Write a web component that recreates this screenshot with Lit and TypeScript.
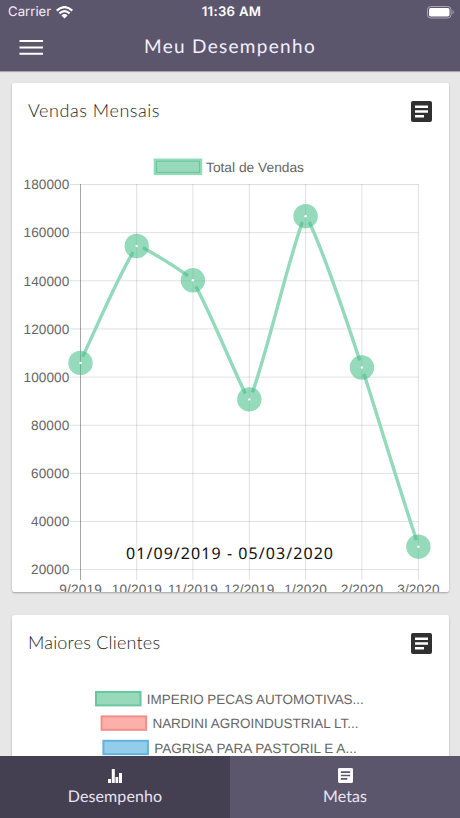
import { LitElement, html, css, svg } from "lit";
import { customElement } from "lit/decorators.js";

const ticks = [180000, 160000, 140000, 120000, 100000, 80000, 60000, 40000, 20000];
const months = ["9/2019", "10/2019", "11/2019", "12/2019", "1/2020", "2/2020", "3/2020"];
const xs = [80.5, 136.7, 192.9, 249.3, 305.6, 361.9, 418.4];
const ys = [362.9, 246, 280.3, 399.4, 216.2, 367.5, 546.7];
const segments = [
  "M82.8 356.5 C99 322 116 281 133.2 252",
  "M143 247.8 C158 256 173 265 188 275.8",
  "M196 286.5 C214 321 230 362 245.3 393.5",
  "M252.5 392.5 C271 338 285 272 302.3 222",
  "M309.3 222 C328 263 345 316 359.8 360.5",
  "M364 374 C382 430 399 488 416.5 540",
];
const clients = [
  { name: "IMPERIO PECAS AUTOMOTIVAS...", x: 95, w: 217, fill: "#98d9bb", line: "#68c79c" },
  { name: "NARDINI AGROINDUSTRIAL LT...", x: 100.6, w: 206, fill: "#fbb1aa", line: "#f48d87" },
  { name: "PAGRISA PARA PASTORIL E A...", x: 102.4, w: 202.5, fill: "#94cceb", line: "#60b3dc" },
];

@customElement("app-root")
export class AppRoot extends LitElement {
  static styles = css`
    :host { display: flex; flex-direction: column; height: 818px; width: 460px; overflow: hidden; background: #e7e7e7; font-family: Lato, sans-serif; color: #222; text-rendering: geometricPrecision; }
    * { box-sizing: border-box; }
    header { flex: none; height: 71px; background: #5c566d; color: #fff; box-shadow: 0 1px 1px #aaa7b3; }
    .status { height: 24px; display: grid; grid-template-columns: 1fr auto 1fr; align-items: center; padding: 0 5px 0 8px; font: 13.2px/24px Inter, sans-serif; }
    .carrier { display: flex; align-items: center; gap: 5px; color: #f0edf5; }
    .clock { font-weight: 600; letter-spacing: .3px; }
    .battery { justify-self: end; }
    .bar { height: 45px; display: grid; grid-template-columns: 62px 1fr 62px; align-items: center; }
    .menu { margin-left: 19px; }
    h1 { margin: 0; text-align: center; font-size: 19px; line-height: 24px; font-weight: 400; letter-spacing: 1.3px; color: #f3effc; }
    main { flex: 1; min-height: 0; overflow: hidden; padding: 11.5px 11.5px 0; display: flex; flex-direction: column; gap: 23px; }
    .card { flex: none; height: 509px; background: #fff; border-radius: 2px; box-shadow: 0 1px 2px #0000004d; overflow: hidden; }
    .head { height: 58px; display: flex; justify-content: space-between; align-items: center; padding: 0 16.5px; }
    h2 { margin: 0; padding-bottom: 3px; font-size: 18px; font-weight: 300; letter-spacing: .55px; }
    h2.tight { letter-spacing: .2px; }
    svg { display: block; }
    svg text { font-family: "Liberation Sans", sans-serif; font-size: 13.6px; fill: #666; }
    svg .period { font-family: "Noto Sans", sans-serif; font-size: 16px; fill: #111; }
    nav { flex: none; height: 62.5px; display: grid; grid-template-columns: 1fr 1fr; color: #e9e3f4; background: #5c566d; }
    .tab { display: flex; flex-direction: column; align-items: center; padding-top: 12px; gap: 4px; font-size: 16px; line-height: 20px; letter-spacing: .1px; }
    .active { background: #443f51; }
  `;

  note(size: number, color: string) {
    return html`<svg width=${size} height=${size} viewBox="0 0 21 21"><path fill=${color} fill-rule="evenodd" d="M2 0H19Q21 0 21 2V19Q21 21 19 21H2Q0 21 0 19V2Q0 0 2 0ZM4 4.6V7H17V4.6ZM4 9.3V11.7H17V9.3ZM4 14V16.4H13V14Z"/></svg>`;
  }

  chart() {
    return html`<svg width="437" height="451" viewBox="12 141 437 451">
      <rect x="155.2" y="160" width="45.5" height="13.6" fill="#98d9bb" stroke="#92dabb" stroke-width="3"/>
      <rect x="156.4" y="161.2" width="43.2" height="11.2" fill="none" stroke="#64c69a"/>
      <text x="206" y="171.7" textLength="98" lengthAdjust="spacingAndGlyphs">Total de Vendas</text>
      ${ticks.map((t, i) => {
        const y = 184.5 + i * 48.15;
        return svg`<path d="M70 ${y}H418.5" stroke="#000" stroke-opacity=".12"/><text x="69.2" y=${y + 4.7} text-anchor="end" textLength=${t >= 100000 ? 45.7 : 38.2}>${t}</text>`;
      })}
      ${months.map((m, i) => svg`<path d="M${xs[i]} 184V580" stroke="#000" stroke-opacity=${i ? ".12" : ".35"}/><text x=${xs[i]} y="593.5" text-anchor="middle" textLength=${m.length > 6 ? 50 : 42.5}>${m}</text>`)}
      ${segments.map((d) => svg`<path d=${d} fill="none" stroke="#92dabb" stroke-width="3.4"/>`)}
      ${xs.map((x, i) => svg`<circle cx=${x} cy=${ys[i]} r="12.2" fill="#43be87" fill-opacity=".57"/><circle cx=${x} cy=${ys[i]} r="1.2" fill="#fff"/>`)}
      <text class="period" x="126" y="559" textLength="207">01/09/2019 - 05/03/2020</text>
    </svg>`;
  }

  render() {
    return html`
      <header>
        <div class="status">
          <div class="carrier"><span>Carrier</span><svg width="17" height="13" viewBox="0 0 17 13"><path d="M.7 4.6Q8.5-2.4 16.3 4.6M3.4 7.3Q8.5 2.9 13.6 7.3" fill="none" stroke="#fff" stroke-width="2.2"/><path d="M5.4 9.4Q8.5 6.8 11.6 9.4L8.5 12.6Z" fill="#fff"/></svg></div>
          <span class="clock">11:36 AM</span>
          <svg class="battery" width="28" height="13" viewBox="0 0 28 13"><rect x=".5" y=".5" width="23.5" height="11.5" rx="3.2" fill="none" stroke="#aaa5b5"/><rect x="2" y="2" width="20.5" height="8.5" rx="1.7" fill="#fff"/><path d="M25.5 4Q28 6.2 25.5 8.4Z" fill="#aaa5b5"/></svg>
        </div>
        <div class="bar"><svg class="menu" width="25" height="16" viewBox="0 0 25 16"><path d="M.5 2H24M.5 8.5H24M.5 14.8H24" stroke="#fff" stroke-width="2"/></svg><h1>Meu Desempenho</h1></div>
      </header>
      <main>
        <section class="card"><div class="head"><h2>Vendas Mensais</h2>${this.note(21, "#303030")}</div>${this.chart()}</section>
        <section class="card"><div class="head"><h2 class="tight">Maiores Clientes</h2>${this.note(21, "#303030")}</div>
          <svg width="437" height="451" viewBox="12 673 437 451">
            ${clients.map((c, i) => svg`<rect x=${c.x + 1} y=${692 + i * 24.4} width="44.5" height="13.4" fill=${c.fill} stroke=${c.line} stroke-width="2"/><text x=${c.x + 51.8} y=${703.7 + i * 24.4} textLength=${c.w} lengthAdjust="spacingAndGlyphs">${c.name}</text>`)}
          </svg>
        </section>
      </main>
      <nav>
        <div class="tab active"><svg width="14" height="15" viewBox="0 0 14 15"><path d="M0 11H3V15H0ZM3.8 1H6.8V15H3.8ZM7.5 9H10.2V15H7.5ZM11 5H14V15H11Z" fill="#fff"/></svg><span>Desempenho</span></div>
        <div class="tab">${this.note(15, "#fff")}<span>Metas</span></div>
      </nav>`;
  }
}
